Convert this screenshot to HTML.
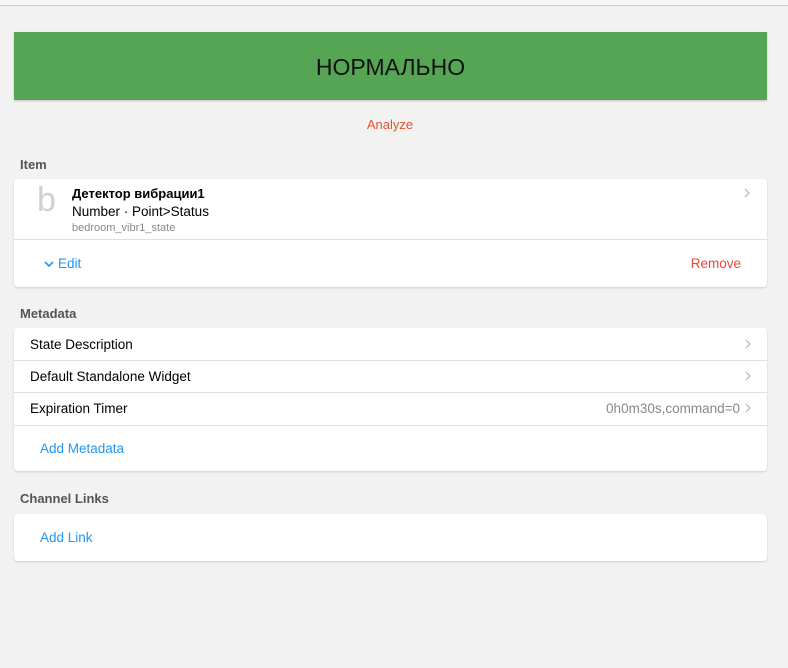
<!DOCTYPE html>
<html><head><meta charset="utf-8"><style>
body{margin:0;width:788px;height:668px;background:#f2f2f2;font-family:"Liberation Sans","Noto Sans CJK SC",sans-serif;position:relative;overflow:hidden;font-size:13px;color:#000}
.top{position:absolute;left:0;top:0;width:788px;height:5px;background:#f7f7f7;border-bottom:1px solid #ccc}
.banner{position:absolute;left:14px;top:32px;width:753px;height:68px;background:#55a555;box-shadow:0 1px 2px rgba(0,0,0,.2);display:flex;align-items:center;justify-content:center;font-size:23px;color:#111;padding-top:2px;box-sizing:border-box}
.abs{position:absolute}
.lbl{position:absolute;left:20px;font-size:13px;font-weight:bold;color:#555}
.card{position:absolute;left:14px;width:753px;background:#fff;border-radius:4px;box-shadow:0 1px 2px rgba(0,0,0,.15)}
.row{position:absolute;left:0;right:0;height:32px;line-height:33px;padding-left:16px;font-size:13.5px}
.row.b{border-bottom:1px solid #e0e0e0}
.chev{position:absolute;right:16px;top:0;color:#888;display:flex;align-items:center;height:32px}
.blue{color:#2196f3}
</style></head><body>
<div class="top"></div>
<div class="banner">НОРМАЛЬНО</div>
<div class="abs" style="left:0;width:780px;top:117px;text-align:center;color:#e6522c;font-size:13px">Analyze</div>
<div class="lbl" style="top:157px">Item</div>
<div class="card" style="top:179px;height:108px">
 <div class="abs" style="left:23px;top:2px;font-size:34px;color:#d0d0d0;font-weight:300">b</div>
 <div class="abs" style="left:58px;top:7px;font-weight:bold;font-size:13px">Детектор вибрации1</div>
 <div class="abs" style="left:58px;top:25px;font-size:13.5px">Number · Point&gt;Status</div>
 <div class="abs" style="left:58px;top:43px;font-size:11px;color:#888">bedroom_vibr1_state</div>
 <svg class="abs" style="right:17px;top:9px" width="6" height="10" viewBox="0 0 6 10"><path d="M1 1l4 4-4 4" stroke="#bbb" stroke-width="1.3" fill="none"/></svg>
 <div class="abs" style="left:0;right:0;top:60px;border-top:1px solid #e0e0e0"></div>
 <div class="abs blue" style="left:30px;top:77px;font-size:13.5px"><svg width="10" height="8" viewBox="0 0 10 8" style="margin-right:4px"><path d="M1 2l4 4 4-4" stroke="#2196f3" stroke-width="1.6" fill="none"/></svg>Edit</div>
 <div class="abs" style="right:26px;top:77px;color:#f44336;font-size:13.5px">Remove</div>
</div>
<div class="lbl" style="top:306px">Metadata</div>
<div class="card" style="top:328px;height:143px">
 <div class="row b" style="top:0">State Description<span class="chev"><svg width="6" height="10" viewBox="0 0 6 10"><path d="M1 1l4 4-4 4" stroke="#bbb" stroke-width="1.3" fill="none"/></svg></span></div>
 <div class="row b" style="top:32px">Default Standalone Widget<span class="chev"><svg width="6" height="10" viewBox="0 0 6 10"><path d="M1 1l4 4-4 4" stroke="#bbb" stroke-width="1.3" fill="none"/></svg></span></div>
 <div class="row b" style="top:64px;height:33px">Expiration Timer<span class="chev"><span style="margin-right:5px">0h0m30s,command=0</span><svg width="6" height="10" viewBox="0 0 6 10"><path d="M1 1l4 4-4 4" stroke="#bbb" stroke-width="1.3" fill="none"/></svg></span></div>
 <div class="abs blue" style="left:26px;top:113px;font-size:13.5px">Add Metadata</div>
</div>
<div class="lbl" style="top:491px">Channel Links</div>
<div class="card" style="top:514px;height:47px">
 <div class="abs blue" style="left:26px;top:16px;font-size:13.5px">Add Link</div>
</div>
</body></html>
